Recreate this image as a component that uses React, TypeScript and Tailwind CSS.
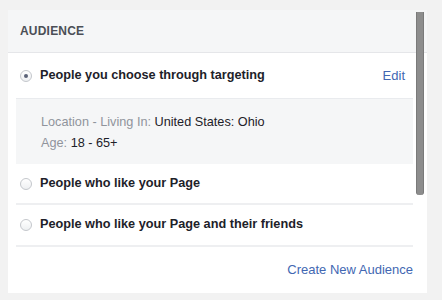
import React from "react";

const Radio: React.FC<{ checked?: boolean }> = ({ checked }) => (
  <span className="flex h-[12px] w-[12px] shrink-0 items-center justify-center rounded-full border border-[#c4c7cc] bg-gradient-to-b from-white to-[#eef0f2]">
    {checked && <span className="h-[4px] w-[4px] rounded-full bg-[#5b6278]" />}
  </span>
);

const OptionRow: React.FC<{ label: string; checked?: boolean; action?: string; className?: string }> = ({
  label,
  checked,
  action,
  className,
}) => (
  <div className={`flex items-center pl-1 pr-2 ${className ?? ""}`}>
    <Radio checked={checked} />
    <span className="ml-[8px] text-[12.7px] font-bold text-[#1d2129]">{label}</span>
    {action && <span className="ml-auto text-[13px] text-[#4267b2]">{action}</span>}
  </div>
);

export default function App() {
  return (
    <div
      className="h-[300px] w-[442px] overflow-hidden bg-[#f2f2f2] pt-[10px] pl-[8px]"
      style={{ fontFamily: '"Liberation Sans", Arial, sans-serif' }}
    >
      <div className="relative h-[283px] w-[419px] bg-white">
        <div className="flex h-[43px] items-center border-b border-[#e5e6e9] bg-[#f5f6f7] px-3">
          <span className="text-[12px] font-bold tracking-[0.2px] text-[#4b4f56]">AUDIENCE</span>
        </div>

        <div className="pl-2 pr-[14px]">
          <OptionRow label="People you choose through targeting" checked action="Edit" className="h-[46px] border-b border-[#e9ebee]" />

          <div className="h-[65px] bg-[#f5f6f7] pl-[25px] pt-[13px] text-[12.7px] leading-[21px]">
            <div>
              <span className="text-[#90949c]">Location - Living In: </span>
              <span className="text-[#1d2129]">United States: Ohio</span>
            </div>
            <div>
              <span className="text-[#90949c]">Age: </span>
              <span className="text-[#1d2129]">18 - 65+</span>
            </div>
          </div>

          <OptionRow label="People who like your Page" className="h-[41px] border-b-2 border-[#eeeff1]" />
          <OptionRow label="People who like your Page and their friends" className="h-[42px] border-b-2 border-[#eeeff1]" />

          <div className="flex h-[45px] items-center justify-end">
            <span className="text-[13px] text-[#4267b2]">Create New Audience</span>
          </div>
        </div>

        <div className="absolute right-[3px] top-[2px] h-[183px] w-[8px] rounded-b-[3px] bg-[#8d8d8d] border-x border-[#7a7a7a]" />
      </div>
    </div>
  );
}
